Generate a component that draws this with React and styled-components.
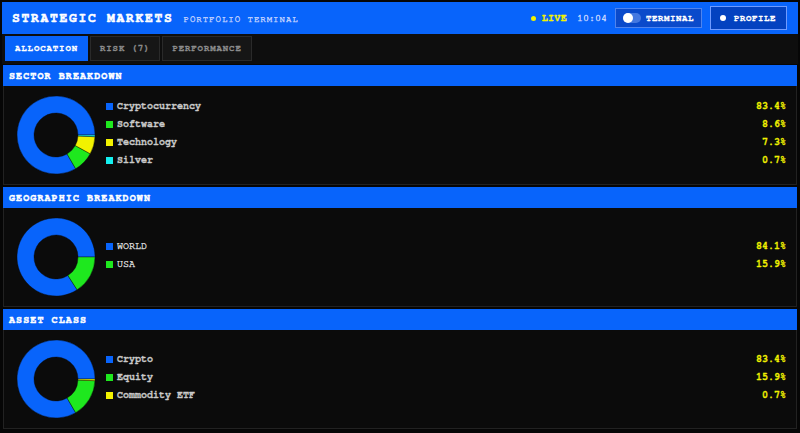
import styled, { createGlobalStyle } from 'styled-components';

const BLUE = '#0864fb';
const GREEN = '#1ee81e';
const YELLOW = '#f2f200';
const CYAN = '#14f0f0';

const sections = [
    {
        title: 'SECTOR BREAKDOWN',
        items: [
            { label: 'Cryptocurrency', value: 83.4, color: BLUE },
            { label: 'Software', value: 8.6, color: GREEN },
            { label: 'Technology', value: 7.3, color: YELLOW },
            { label: 'Silver', value: 0.7, color: CYAN },
        ],
    },
    {
        title: 'GEOGRAPHIC BREAKDOWN',
        light: true,
        items: [
            { label: 'WORLD', value: 84.1, color: BLUE },
            { label: 'USA', value: 15.9, color: GREEN },
        ],
    },
    {
        title: 'ASSET CLASS',
        items: [
            { label: 'Crypto', value: 83.4, color: BLUE },
            { label: 'Equity', value: 15.9, color: GREEN },
            { label: 'Commodity ETF', value: 0.7, color: YELLOW },
        ],
    },
];

const Global = createGlobalStyle`
  html, body { margin: 0; padding: 0; background: #050505; }
  body {
    font-family: "Nimbus Mono PS", "Nimbus Mono L", "FreeMono", "Courier", "Courier New", "Liberation Mono", monospace;
    -webkit-text-stroke: 0.3px currentColor;
  }
`;

const Page = styled.div`
  width: 800px;
  height: 433px;
  box-sizing: border-box;
  padding: 2px;
  background: #060606;
  overflow: hidden;
  display: flex;
  flex-direction: column;
`;

const TopBar = styled.header`
  height: 32px;
  flex-shrink: 0;
  background: ${BLUE};
  display: flex;
  align-items: center;
  padding: 0 11px 0 10px;
`;

const Title = styled.h1`
  margin: 0;
  font-size: 13px;
  font-weight: 700;
  letter-spacing: 1.7px;
  color: #fff;
  -webkit-text-stroke: 0.5px #fff;
`;

const Subtitle = styled.span`
  margin-left: 10px;
  font-size: 9px;
  letter-spacing: 1px;
  color: #b8cbff;
  padding-top: 2px;
  -webkit-text-stroke: 0.45px currentColor;
`;

const Right = styled.div`
  margin-left: auto;
  display: flex;
  align-items: center;
`;

const Live = styled.span`
  display: flex;
  align-items: center;
  gap: 6px;
  font-size: 10px;
  font-weight: 700;
  color: ${YELLOW};
  letter-spacing: 0.3px;
  &::before {
    content: '';
    width: 5px;
    height: 5px;
    border-radius: 50%;
    background: ${YELLOW};
  }
`;

const Clock = styled.span`
  margin-left: 10px;
  font-size: 10px;
  color: #c4d4ff;
  -webkit-text-stroke: 0.45px currentColor;
`;

const HeadButton = styled.div`
  display: flex;
  align-items: center;
  gap: ${p => p.$tall ? 8 : 5}px;
  box-sizing: border-box;
  height: ${p => p.$tall ? 24 : 20}px;
  padding: 0 ${p => p.$tall ? '10px 0 9px' : '7px'};
  margin-left: 8px;
  background: ${p => p.$tall ? '#0342c0' : '#0a4acb'};
  border: 1px solid ${p => p.$tall ? '#6f9bff' : '#4f84ee'};
  font-size: 9px;
  font-weight: 700;
  letter-spacing: 0.6px;
  color: #fff;
`;

const Toggle = styled.span`
  position: relative;
  width: 18px;
  height: 10px;
  border-radius: 5px;
  background: #4478e0;
  &::after {
    content: '';
    position: absolute;
    left: 0;
    top: 0;
    width: 10px;
    height: 10px;
    border-radius: 50%;
    background: #fff;
  }
`;

const Dot = styled.span`
  width: 6px;
  height: 6px;
  border-radius: 50%;
  background: #fff;
`;

const TabBar = styled.nav`
  height: 30px;
  flex-shrink: 0;
  box-sizing: border-box;
  background: #0e0e0e;
  display: flex;
  gap: 2px;
  padding: 2px 3px 3px;
`;

const Tab = styled.div`
  display: flex;
  align-items: center;
  padding: 0 9px;
  box-sizing: border-box;
  font-size: 9px;
  font-weight: 700;
  letter-spacing: 0.9px;
  color: ${p => p.$active ? '#fff' : '#8c8c8c'};
  background: ${p => p.$active ? BLUE : '#161616'};
  border: 1px solid ${p => p.$active ? BLUE : '#2a2a2a'};
`;

const Sections = styled.main`
  display: flex;
  flex-direction: column;
  gap: 2px;
  padding: 1px 1px 0;
`;

const Section = styled.section`
  display: flex;
  flex-direction: column;
`;

const SectionHead = styled.h2`
  margin: 0;
  height: 21px;
  display: flex;
  align-items: center;
  padding: 0 6px;
  background: ${BLUE};
  color: #fff;
  font-size: 10px;
  font-weight: 700;
  letter-spacing: 1.1px;
  -webkit-text-stroke: 0.45px #fff;
`;

const Body = styled.div`
  height: 99px;
  box-sizing: border-box;
  display: flex;
  align-items: center;
  gap: 10px;
  padding: 0 10px 0 12px;
  background: #0b0b0b;
  border: 1px solid #222;
  border-top: none;
`;

const Legend = styled.ul`
  flex: 1;
  list-style: none;
  margin: 0 0 4px;
  padding: 0;
  display: flex;
  flex-direction: column;
`;

const Row = styled.li`
  height: 18px;
  display: flex;
  align-items: center;
  gap: 4px;
  font-size: 10px;
`;

const Swatch = styled.span`
  width: 7px;
  height: 7px;
  background: ${p => p.$color};
`;

const Label = styled.span`
  flex: 1;
  color: #cacaca;
  font-weight: ${p => p.$light ? 400 : 700};
  -webkit-text-stroke: ${p => p.$light ? 0.45 : 0.3}px currentColor;
`;

const Value = styled.span`
  color: ${YELLOW};
  font-weight: 700;
`;

function arc(cx, cy, ro, ri, a0, a1) {
    const p = (r, a) => {
        const t = (a * Math.PI) / 180;
        return `${(cx + r * Math.cos(t)).toFixed(2)} ${(cy - r * Math.sin(t)).toFixed(2)}`;
    };
    const large = a1 - a0 > 180 ? 1 : 0;
    return `M ${p(ro, a0)} A ${ro} ${ro} 0 ${large} 0 ${p(ro, a1)} L ${p(ri, a1)} A ${ri} ${ri} 0 ${large} 1 ${p(ri, a0)} Z`;
}

function Donut({ items }) {
    const total = items.reduce((s, i) => s + i.value, 0);
    let start = 0;
    return (
        <svg width="80" height="80" viewBox="0 0 80 80">
            {items.map(i => {
                const end = start + (i.value / total) * 360;
                const d = arc(40, 40, 39, 22, start, end);
                start = end;
                return <path key={i.label} d={d} fill={i.color} stroke="#0b0b0b" strokeWidth="0.4" />;
            })}
        </svg>
    );
}

export default function App() {
    return (
        <Page>
            <Global />
            <TopBar>
                <Title>STRATEGIC MARKETS</Title>
                <Subtitle>PORTFOLIO TERMINAL</Subtitle>
                <Right>
                    <Live>LIVE</Live>
                    <Clock>10:04</Clock>
                    <HeadButton><Toggle />TERMINAL</HeadButton>
                    <HeadButton $tall><Dot />PROFILE</HeadButton>
                </Right>
            </TopBar>
            <TabBar>
                <Tab $active>ALLOCATION</Tab>
                <Tab>RISK (7)</Tab>
                <Tab>PERFORMANCE</Tab>
            </TabBar>
            <Sections>
                {sections.map(s => (
                    <Section key={s.title}>
                        <SectionHead>{s.title}</SectionHead>
                        <Body>
                            <Donut items={s.items} />
                            <Legend>
                                {s.items.map(i => (
                                    <Row key={i.label}>
                                        <Swatch $color={i.color} />
                                        <Label $light={s.light}>{i.label}</Label>
                                        <Value>{i.value.toFixed(1)}%</Value>
                                    </Row>
                                ))}
                            </Legend>
                        </Body>
                    </Section>
                ))}
            </Sections>
        </Page>
    );
}
